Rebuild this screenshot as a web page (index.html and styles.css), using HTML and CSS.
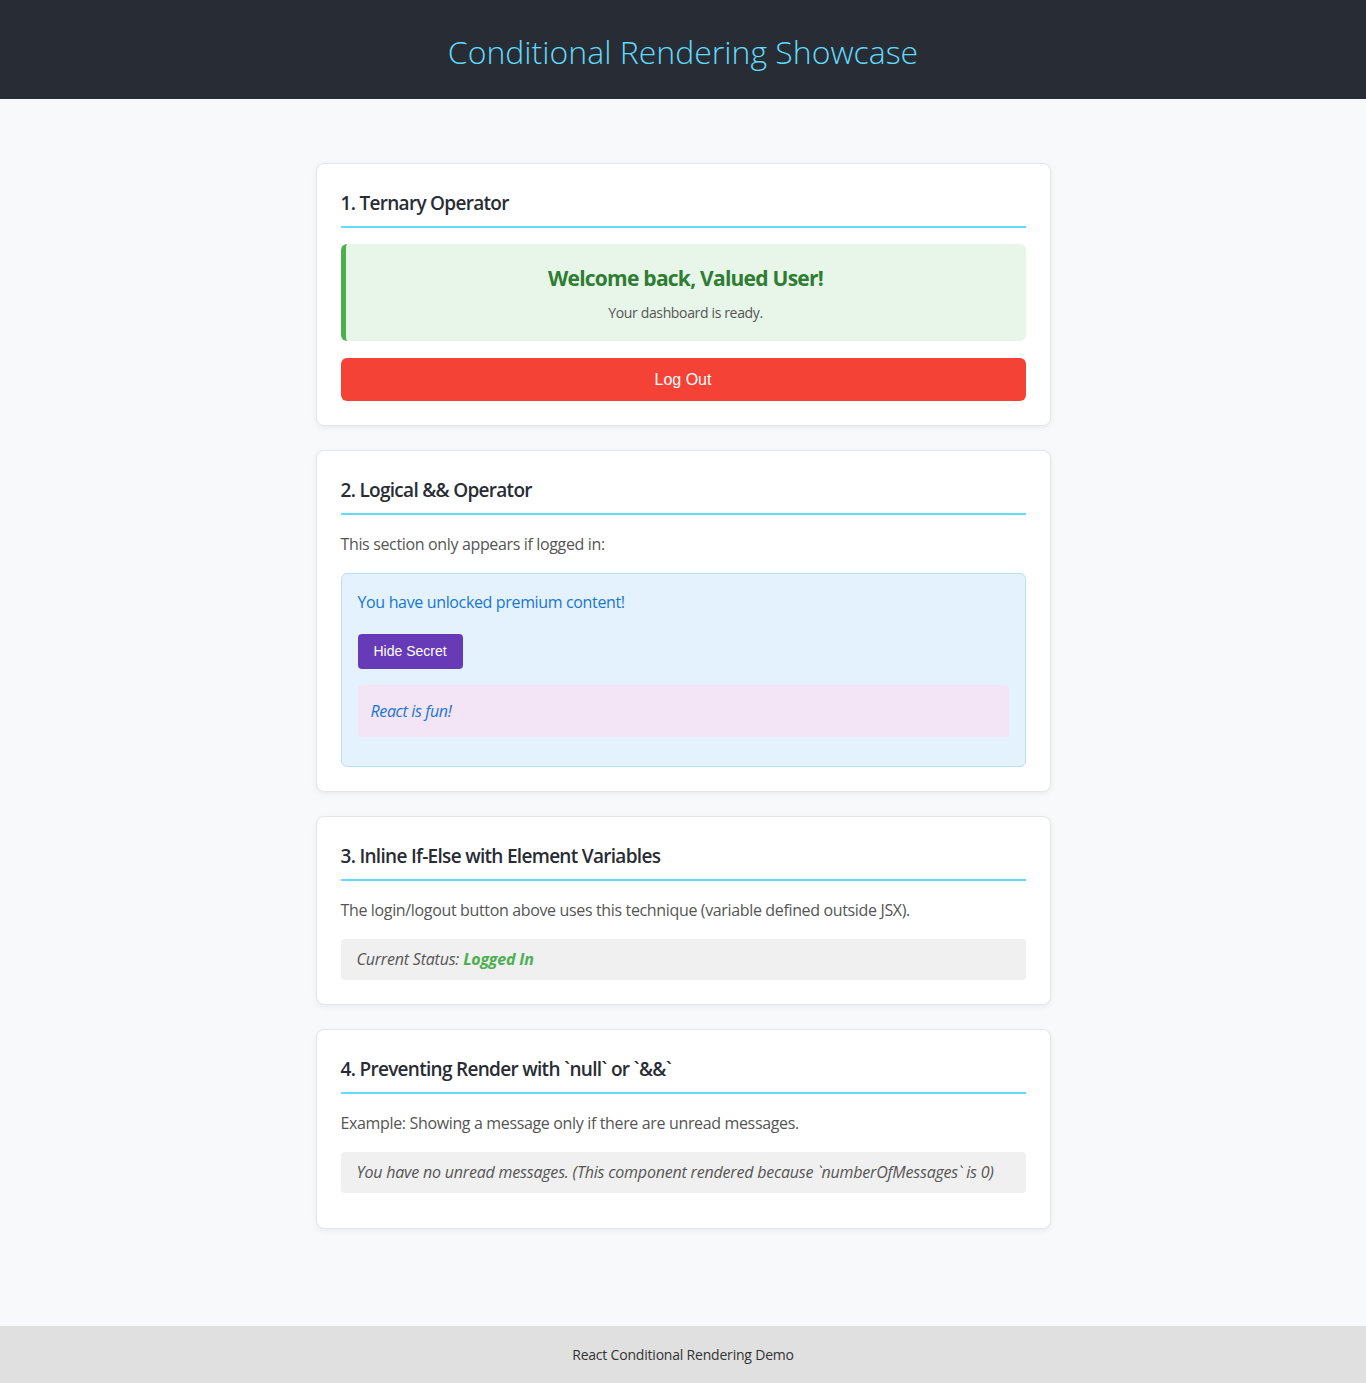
FILE: index.html
```html
<!DOCTYPE html>
<html lang="en">
<head>
<meta charset="utf-8">
<title>Conditional Rendering Showcase</title>
<link rel="stylesheet" href="styles.css">
</head>
<body>
<header class="app-header">
  <h1 class="app-title">Conditional Rendering Showcase</h1>
</header>
<main class="app-main">
  <section class="card">
    <h2 class="card-title">1. Ternary Operator</h2>
    <div class="welcome">
      <h3 class="welcome-title">Welcome back, Valued User!</h3>
      <p class="welcome-sub">Your dashboard is ready.</p>
    </div>
    <button class="btn-logout">Log Out</button>
  </section>

  <section class="card">
    <h2 class="card-title">2. Logical &amp;&amp; Operator</h2>
    <p class="text">This section only appears if logged in:</p>
    <div class="premium">
      <p class="premium-text">You have unlocked premium content!</p>
      <button class="btn-secret">Hide Secret</button>
      <div class="secret"><em>React is fun!</em></div>
    </div>
  </section>

  <section class="card">
    <h2 class="card-title">3. Inline If-Else with Element Variables</h2>
    <p class="text">The login/logout button above uses this technique (variable defined outside JSX).</p>
    <p class="status"><em>Current Status: <strong class="status-on">Logged In</strong></em></p>
  </section>

  <section class="card">
    <h2 class="card-title">4. Preventing Render with `null` or `&amp;&amp;`</h2>
    <p class="text">Example: Showing a message only if there are unread messages.</p>
    <p class="status status-last"><em>You have no unread messages. (This component rendered because `numberOfMessages` is 0)</em></p>
  </section>
</main>
<footer class="app-footer">React Conditional Rendering Demo</footer>
</body>
</html>
```

FILE: styles.css
```css
* { box-sizing: border-box; }

html, body { margin: 0; padding: 0; }

body {
  font-family: "Open Sans", "Noto Sans", sans-serif;
  background: #f8f9fb;
  color: #333;
  min-height: 100vh;
  display: flex;
  flex-direction: column;
  letter-spacing: -0.35px;
}

.app-header {
  background: #282c34;
  height: 99px;
  padding-top: 4px;
  display: flex;
  align-items: center;
  justify-content: center;
}

.app-title {
  margin: 0;
  font-size: 32px;
  font-weight: 300;
  color: #61dafb;
  line-height: 1.3;
  letter-spacing: 0;
}

.app-main {
  flex: 1;
  width: 735px;
  margin: 0 auto;
  padding: 64px 0 40px;
}

.card {
  background: #fff;
  border: 1px solid #e3e5e8;
  border-radius: 8px;
  box-shadow: 0 2px 6px rgba(0, 0, 0, 0.06);
  padding: 24px;
  margin-bottom: 24px;
}

.card-title {
  margin: 0 0 16px;
  padding: 2px 0 10px;
  border-bottom: 2px solid #61dafb;
  font-size: 19px;
  font-weight: 600;
  color: #282c34;
  line-height: 26px;
  letter-spacing: -0.7px;
}

.text {
  margin: 0 0 16px;
  font-size: 16px;
  line-height: 25px;
  padding-top: 1px;
  color: #555;
}

.welcome {
  background: #e8f5e9;
  border-left: 5px solid #4caf50;
  border-radius: 6px;
  padding: 20px 20px 19px;
  text-align: center;
}

.welcome-title {
  margin: 0 0 11px;
  font-size: 21px;
  font-weight: 700;
  color: #2e7d32;
  line-height: 28px;
  letter-spacing: -0.75px;
}

.welcome-sub {
  margin: 0;
  font-size: 14px;
  color: #555;
  line-height: 19px;
}

.btn-logout {
  display: block;
  width: 100%;
  margin-top: 17px;
  padding: 12px;
  border: none;
  border-radius: 6px;
  background: #f44336;
  color: #fff;
  font-family: "Liberation Sans", Arial, sans-serif;
  font-size: 16px;
  line-height: 19px;
  letter-spacing: 0;
}

.premium {
  background: #e3f2fd;
  border: 1px solid #bbdefb;
  border-radius: 6px;
  padding: 16px 16px 13px;
}

.premium-text {
  margin: 0 0 20px;
  font-size: 16px;
  line-height: 24px;
  color: #1976d2;
}

.btn-secret {
  display: block;
  padding: 9px 16px;
  border: none;
  border-radius: 4px;
  background: #673ab7;
  color: #fff;
  font-family: "Liberation Sans", Arial, sans-serif;
  font-size: 14px;
  line-height: 17px;
  letter-spacing: 0;
}

.secret {
  margin: 16px 0 16px;
  padding: 14px 13px;
  background: #f3e5f5;
  border-radius: 4px;
  font-size: 16px;
  line-height: 24px;
  color: #1976d2;
}

.status {
  margin: 0;
  padding: 8px 16px;
  background: #f0f0f0;
  border-radius: 4px;
  font-size: 16px;
  line-height: 25px;
  color: #555;
  letter-spacing: -0.2px;
}

.status-last { margin-bottom: 11px; }

.status-on {
  color: #4caf50;
  font-weight: 700;
}

.app-footer {
  background: #e0e0e0;
  padding: 19px;
  text-align: center;
  font-size: 14px;
  line-height: 19px;
  color: #333;
  letter-spacing: -0.2px;
}
```
